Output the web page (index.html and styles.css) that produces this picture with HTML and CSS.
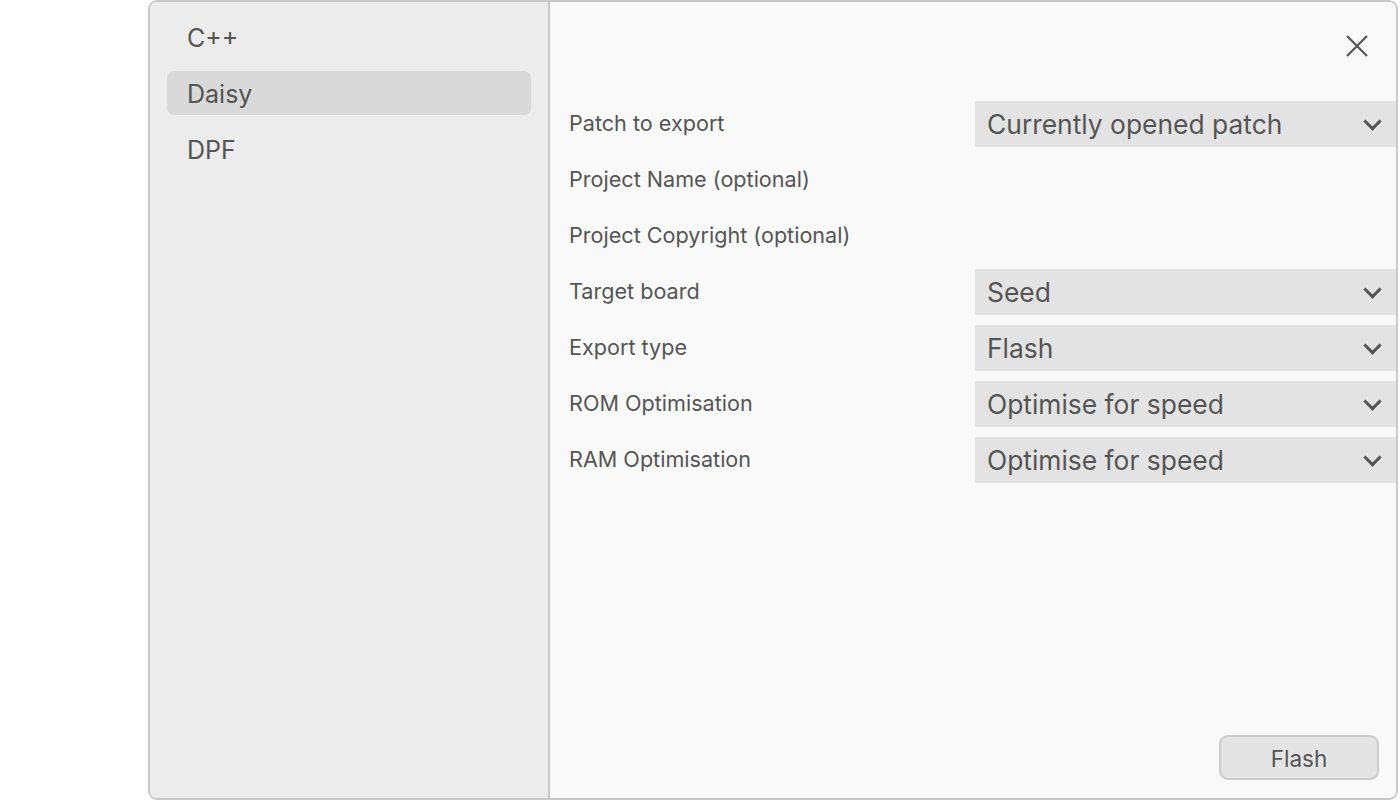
FILE: index.html
```html
<!DOCTYPE html>
<html lang="en">
<head>
    <meta charset="UTF-8">
    <meta name="viewport" content="width=device-width, initial-scale=1.0">
    <title>Export</title>
    <link rel="stylesheet" href="styles.css">
</head>
<body>
    <div class="dialog">
        <div class="sidebar">
            <div class="side-item">C++</div>
            <div class="side-item active">Daisy</div>
            <div class="side-item">DPF</div>
        </div>
        <div class="content">
            <div class="top-bar">
                <button class="close-btn" aria-label="Close">
                    <svg width="22" height="22" viewBox="0 0 22 22">
                        <path d="M1 1 L21 21 M21 1 L1 21" stroke="#555" stroke-width="2.2" fill="none"/>
                    </svg>
                </button>
            </div>
            <div class="form">
                <div class="label">Patch to export</div>
                <div class="select">Currently opened patch<span class="chevron"></span></div>

                <div class="label">Project Name (optional)</div>
                <div class="empty"></div>

                <div class="label">Project Copyright (optional)</div>
                <div class="empty"></div>

                <div class="label">Target board</div>
                <div class="select">Seed<span class="chevron"></span></div>

                <div class="label">Export type</div>
                <div class="select">Flash<span class="chevron"></span></div>

                <div class="label">ROM Optimisation</div>
                <div class="select">Optimise for speed<span class="chevron"></span></div>

                <div class="label">RAM Optimisation</div>
                <div class="select">Optimise for speed<span class="chevron"></span></div>
            </div>
            <div class="footer">
                <button class="flash-btn">Flash</button>
            </div>
        </div>
    </div>
</body>
</html>
```
FILE: styles.css
```css
body {
    margin: 0;
    padding: 0;
    background: #fff;
    font-family: Inter, "Noto Sans", sans-serif;
    color: #555;
}
.dialog {
    margin-left: 148px;
    width: 1250px;
    height: 800px;
    box-sizing: border-box;
    border: 2px solid #c8c8c8;
    border-radius: 9px;
    overflow: hidden;
    display: flex;
}
.sidebar {
    width: 400px;
    flex-shrink: 0;
    box-sizing: border-box;
    background: #ececec;
    border-right: 2px solid #c8c8c8;
    padding: 13px 17px;
    display: flex;
    flex-direction: column;
    gap: 12px;
}
.side-item {
    height: 44px;
    box-sizing: border-box;
    padding: 2px 0 0 20px;
    line-height: 42px;
    font-size: 25px;
    border-radius: 7px;
    color: #555;
}
.side-item.active {
    background: #d9d9d9;
}
.content {
    flex: 1;
    background: #f9f9f9;
    display: flex;
    flex-direction: column;
    padding-left: 19px;
}
.top-bar {
    height: 99px;
    display: flex;
    justify-content: flex-end;
}
.close-btn {
    margin: 33px 28px 0 0;
    width: 22px;
    height: 22px;
    padding: 0;
    border: none;
    background: none;
}
.form {
    display: grid;
    grid-template-columns: 406px 1fr;
    grid-auto-rows: 46px;
    row-gap: 10px;
}
.label {
    font-size: 21.6px;
    display: flex;
    align-items: center;
    padding-bottom: 2px;
    color: #555;
}
.select {
    position: relative;
    background: #e3e3e3;
    font-size: 26.4px;
    padding-left: 12px;
    display: flex;
    align-items: center;
    color: #555;
}
.chevron {
    position: absolute;
    right: 17px;
    top: 14px;
    width: 10px;
    height: 10px;
    border-right: 3px solid #555;
    border-bottom: 3px solid #555;
    transform: rotate(45deg);
}
.footer {
    margin-top: auto;
    display: flex;
    justify-content: flex-end;
    padding: 0 17px 18px 0;
}
.flash-btn {
    width: 160px;
    height: 45px;
    box-sizing: border-box;
    border: 2px solid #cbcbcb;
    border-radius: 9px;
    background: #e4e4e4;
    padding-top: 3px;
    font-family: Inter, "Noto Sans", sans-serif;
    font-size: 22.5px;
    color: #555;
}
```
